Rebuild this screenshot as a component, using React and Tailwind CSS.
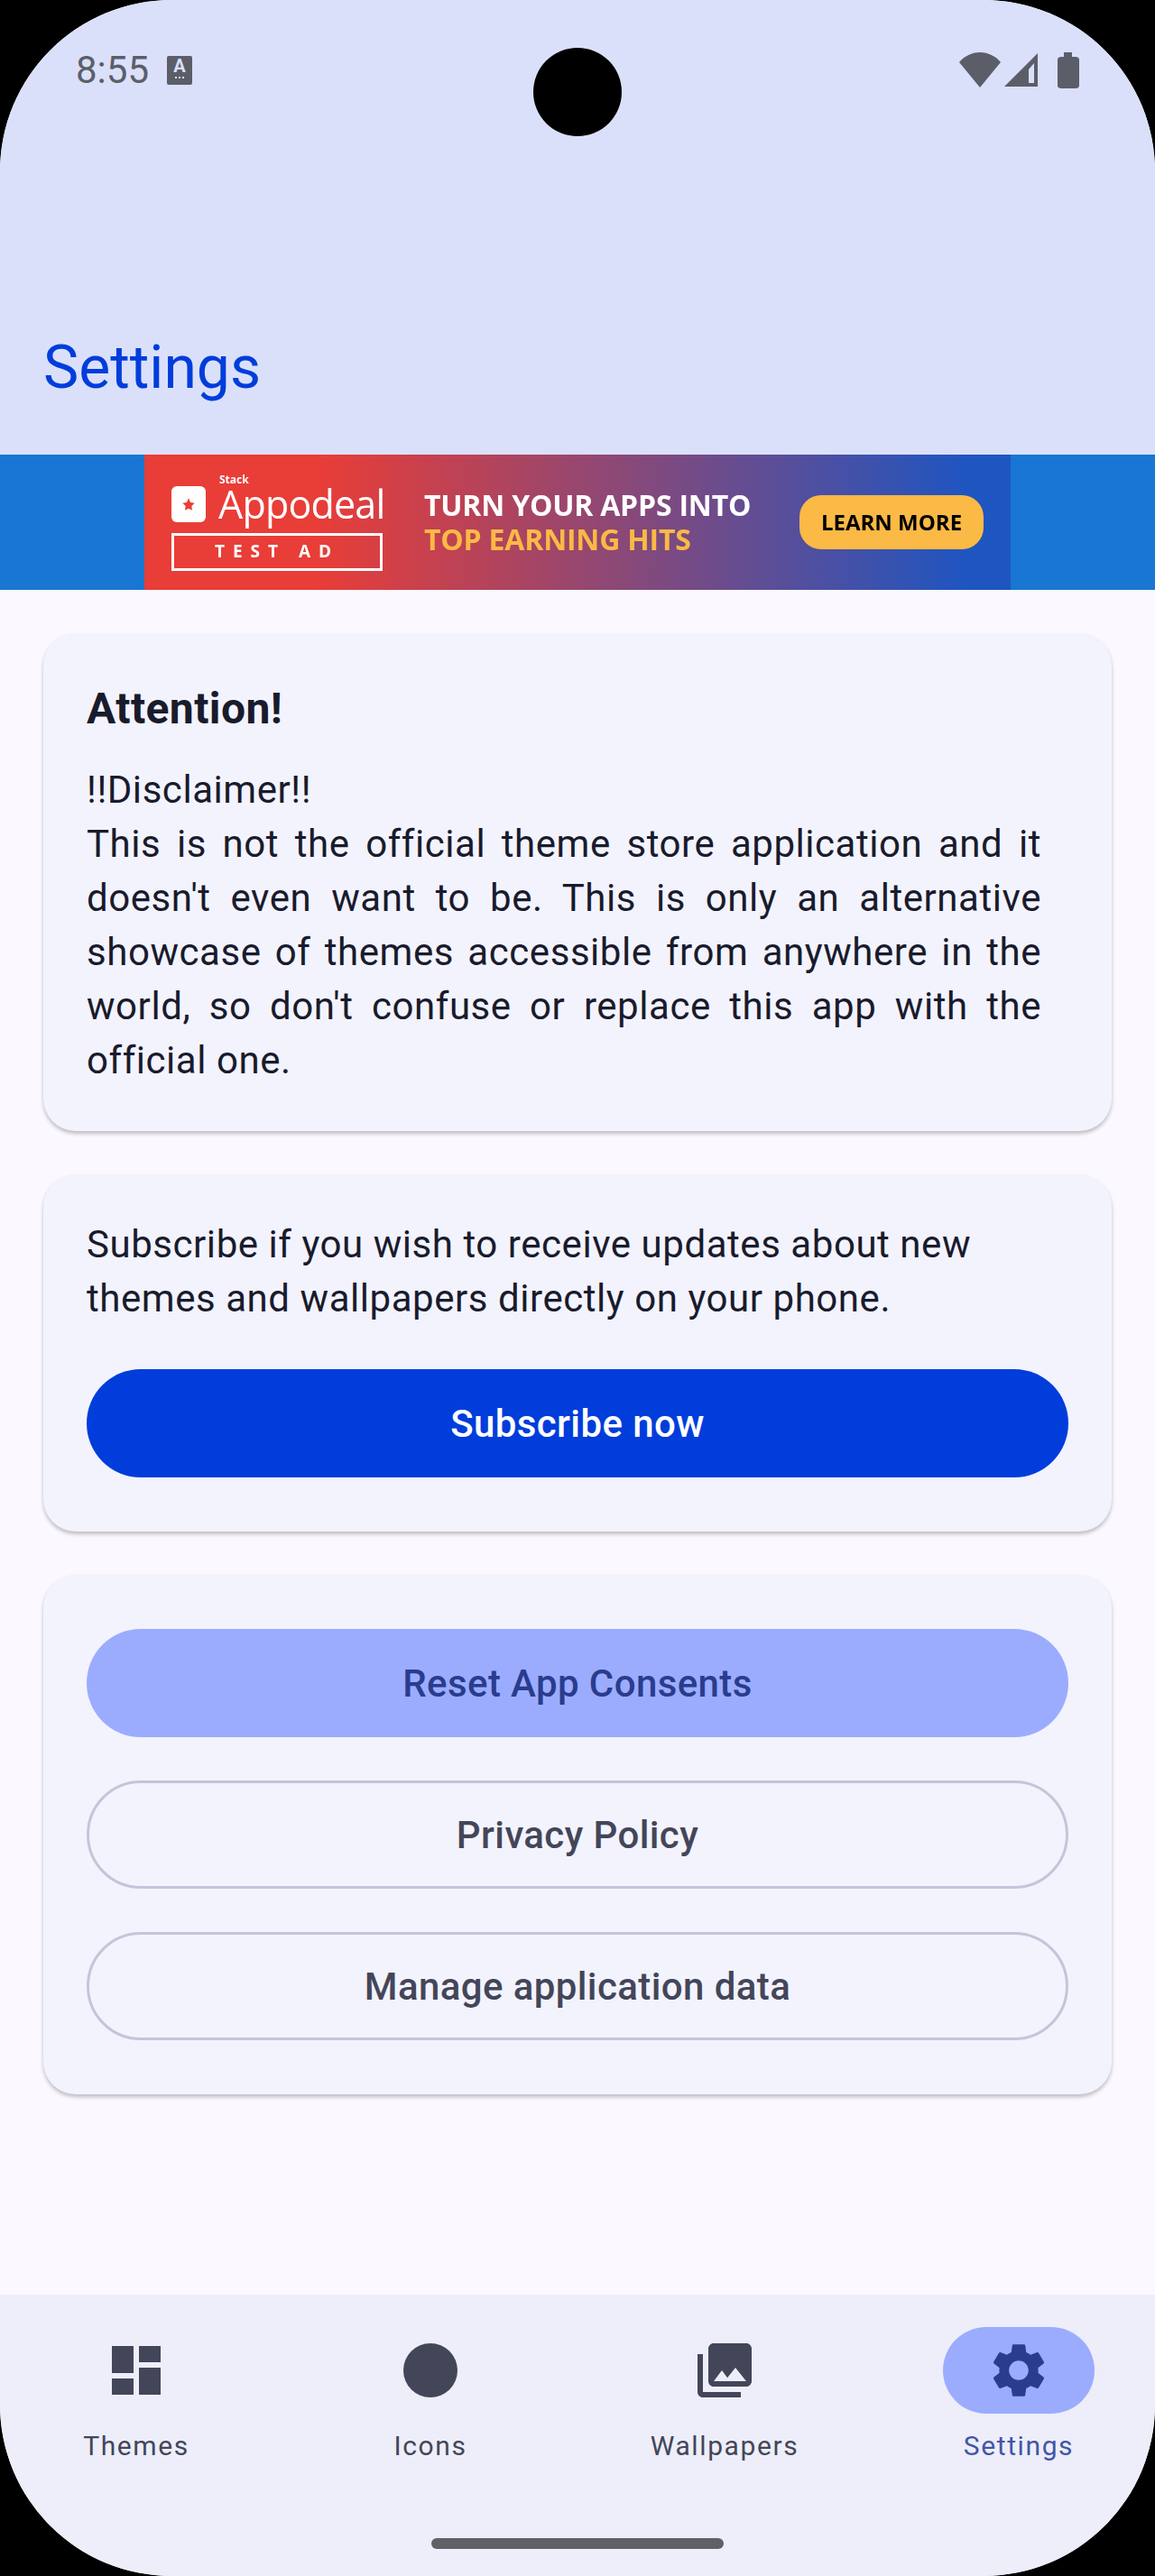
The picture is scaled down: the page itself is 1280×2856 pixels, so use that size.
import React from 'react';

const NAV = [
  { label: 'Themes', icon: <path d="M3 13h8V3H3v10zm0 8h8v-6H3v6zm10 0h8V11h-8v10zm0-18v6h8V3h-8z" /> },
  { label: 'Icons', icon: <circle cx="12" cy="12" r="10" /> },
  { label: 'Wallpapers', icon: <path d="M22 16V4c0-1.1-.9-2-2-2H8c-1.1 0-2 .9-2 2v12c0 1.1.9 2 2 2h12c1.1 0 2-.9 2-2zm-11-4l2.03 2.71L16 11l4 5H8l3-4zM2 6v14c0 1.1.9 2 2 2h14v-2H4V6H2z" /> },
  { label: 'Settings', active: true, icon: <path d="M19.14 12.94c.04-.3.06-.61.06-.94 0-.32-.02-.64-.07-.94l2.03-1.58c.18-.14.23-.41.12-.61l-1.92-3.32c-.12-.22-.37-.29-.59-.22l-2.39.96c-.5-.38-1.03-.7-1.62-.94l-.36-2.54c-.04-.24-.24-.41-.48-.41h-3.84c-.24 0-.43.17-.47.41l-.36 2.54c-.59.24-1.13.57-1.62.94l-2.39-.96c-.22-.08-.47 0-.59.22L2.74 8.87c-.12.21-.08.47.12.61l2.03 1.58c-.05.3-.09.63-.09.94s.02.64.07.94l-2.03 1.58c-.18.14-.23.41-.12.61l1.92 3.32c.12.22.37.29.59.22l2.39-.96c.5.38 1.03.7 1.62.94l.36 2.54c.05.24.24.41.48.41h3.84c.24 0 .44-.17.47-.41l.36-2.54c.59-.24 1.13-.56 1.62-.94l2.39.96c.22.08.47 0 .59-.22l1.92-3.32c.12-.22.07-.47-.12-.61l-2.01-1.58zM12 15.6c-1.98 0-3.6-1.62-3.6-3.6s1.62-3.6 3.6-3.6 3.6 1.62 3.6 3.6-1.62 3.6-3.6 3.6z" /> },
];

function StatusBar() {
  return (
    <div className="flex items-start justify-between pl-[84px] pr-[84px] pt-[53px] text-[#5b5e69]">
      <div className="flex items-center gap-[20px]">
        <span className="text-[42px] leading-[50px]">8:55</span>
        <div className="w-[28px] h-[32px] bg-[#5b5e69] rounded-[2px] flex flex-col items-center text-[#dbe0fa]">
          <span className="text-[20px] font-bold leading-[22px]">A</span>
          <div className="flex gap-[2px] mt-[1px]">
            <span className="w-[2px] h-[2px] bg-[#dbe0fa]" />
            <span className="w-[2px] h-[2px] bg-[#dbe0fa]" />
            <span className="w-[2px] h-[2px] bg-[#dbe0fa]" />
          </div>
        </div>
      </div>
      <div className="flex items-start mt-[5px]">
        <svg width="46" height="40" viewBox="0 0 46 40" fill="currentColor">
          <path d="M0 11C6 4 14 0 23 0s17 4 23 11L23 39 0 11z" />
        </svg>
        <svg width="40" height="40" viewBox="0 0 40 40" fill="currentColor" className="ml-[3px]">
          <path fillRule="evenodd" d="M38 1v37H1L38 1zM34 12l-6 7v15h6V12z" />
        </svg>
        <svg width="24" height="40" viewBox="0 0 24 40" fill="currentColor" className="ml-[20px]">
          <path d="M7 0h9v5h4c2 0 4 1 4 3v29c0 2-2 3-4 3H4c-2 0-4-1-4-3V8c0-2 2-3 4-3h3V0z" />
        </svg>
      </div>
    </div>
  );
}

function AdBanner() {
  return (
    <div className="h-[150px] bg-[#1976d2] flex justify-center">
      <div className="w-[960px] flex items-center pl-[30px] pr-[30px] bg-linear-to-r/srgb from-[#e93d37] from-[20%] to-[#1f55c1] to-[95%] font-['Open_Sans',sans-serif] text-white">
        <div className="w-[234px] flex flex-col blur-[0.4px]">
          <span className="text-[12px] font-bold leading-[12px] ml-[53px]">Stack</span>
          <div className="flex items-center gap-[14px] mt-[1px] h-[40px]">
            <div className="w-[38px] h-[40px] shrink-0 bg-white rounded-[6px] flex items-center justify-center">
              <svg width="16" height="16" viewBox="0 0 24 24" fill="#e93d37"><path d="M12 2l3 7 7 1-5 5 1 7-6-3-6 3 1-7-5-5 7-1z" /></svg>
            </div>
            <span className="text-[43px] leading-[36px] tracking-[-0.8px]">Appodeal</span>
          </div>
          <div className="mt-[12px] h-[42px] border-[3px] border-white flex items-center justify-center text-[19px] font-bold tracking-[9px]">TEST AD</div>
        </div>
        <div className="ml-[46px] flex-1 flex flex-col gap-[12px] font-bold text-[32px] leading-[26px] tracking-[-0.2px] whitespace-nowrap blur-[0.4px]">
          <span>TURN YOUR APPS INTO</span>
          <span className="text-[#fbb945]">TOP EARNING HITS</span>
        </div>
        <div className="w-[204px] h-[60px] rounded-[24px] bg-[#fbb945] flex items-center justify-center text-[24px] font-bold text-black blur-[0.4px]">LEARN MORE</div>
      </div>
    </div>
  );
}

function Card({ children, bottom = 'pb-[60px]', top = 'pt-[48px]' }) {
  return (
    <div className={`bg-[#f3f3fe] rounded-[36px] px-[48px] ${top} ${bottom} shadow-[0_3px_4px_rgba(0,0,0,0.24)]`}>
      {children}
    </div>
  );
}

function PillButton({ className, children }) {
  return (
    <div className={`h-[120px] rounded-full flex items-center justify-center text-[42px] font-medium tracking-[0.4px] ${className}`}>
      {children}
    </div>
  );
}

export default function App() {
  return (
    <div className="w-[1280px] h-[2856px] bg-black font-['Roboto',sans-serif]">
      <div className="relative w-full h-full rounded-[190px] overflow-hidden bg-[#fbf8ff] flex flex-col">
        {/* camera cutout */}
        <div className="absolute left-[591px] top-[53px] w-[98px] h-[98px] rounded-full bg-black" />

        <header className="h-[504px] bg-[#dbe0fa] flex flex-col justify-between">
          <StatusBar />
          <h1 className="pl-[48px] pb-[54px] text-[66px] leading-[84px] text-[#003ddb]">Settings</h1>
        </header>

        <AdBanner />

        <main className="flex-1 px-[48px] pt-[48px] flex flex-col gap-[48px] text-[#191b2c]">
          <Card bottom="pb-[48px]">
            <h2 className="text-[48px] leading-[72px] font-bold tracking-[0.4px]">Attention!</h2>
            <p className="mt-[24px] pr-[30px] text-[42px] leading-[60px] tracking-[0.55px] text-justify">
              !!Disclaimer!!
              <br />
              This is not the official theme store application and it doesn't even want to be. This is only an alternative showcase of themes accessible from anywhere in the world, so don't confuse or replace this app with the official one.
            </p>
          </Card>

          <Card>
            <p className="pr-[30px] text-[42px] leading-[60px] tracking-[0.55px]">
              Subscribe if you wish to receive updates about new themes and wallpapers directly on your phone.
            </p>
            <PillButton className="mt-[48px] bg-[#003ddb] text-white">Subscribe now</PillButton>
          </Card>

          <Card top="pt-[60px]">
            <div className="flex flex-col gap-[48px] text-[#434659]">
              <PillButton className="bg-[#9bacff] text-[#2a3c8d]">Reset App Consents</PillButton>
              <PillButton className="border-[3px] border-[#c4c5d9]">Privacy Policy</PillButton>
              <PillButton className="border-[3px] border-[#c4c5d9]">Manage application data</PillButton>
            </div>
          </Card>
        </main>

        <nav className="h-[312px] bg-[#edeef9] flex flex-col items-center">
          <div className="w-full grid grid-cols-4 gap-[24px] pt-[36px]">
            {NAV.map((item) => (
              <div key={item.label} className="flex flex-col items-center">
                <div className={`w-[168px] h-[96px] rounded-full flex items-center justify-center ${item.active ? 'bg-[#9bacff] text-[#2a3c8d]' : 'text-[#434659]'}`}>
                  <svg width="72" height="72" viewBox="0 0 24 24" fill="currentColor">{item.icon}</svg>
                </div>
                <span className={`mt-[12px] text-[30px] leading-[48px] font-[450] tracking-[1.6px] ${item.active ? 'text-[#4355a8]' : 'text-[#434659]'}`}>{item.label}</span>
              </div>
            ))}
          </div>
          <div className="mt-auto mb-[30px] w-[324px] h-[12px] rounded-full bg-[#616065]" />
        </nav>
      </div>
    </div>
  );
}
